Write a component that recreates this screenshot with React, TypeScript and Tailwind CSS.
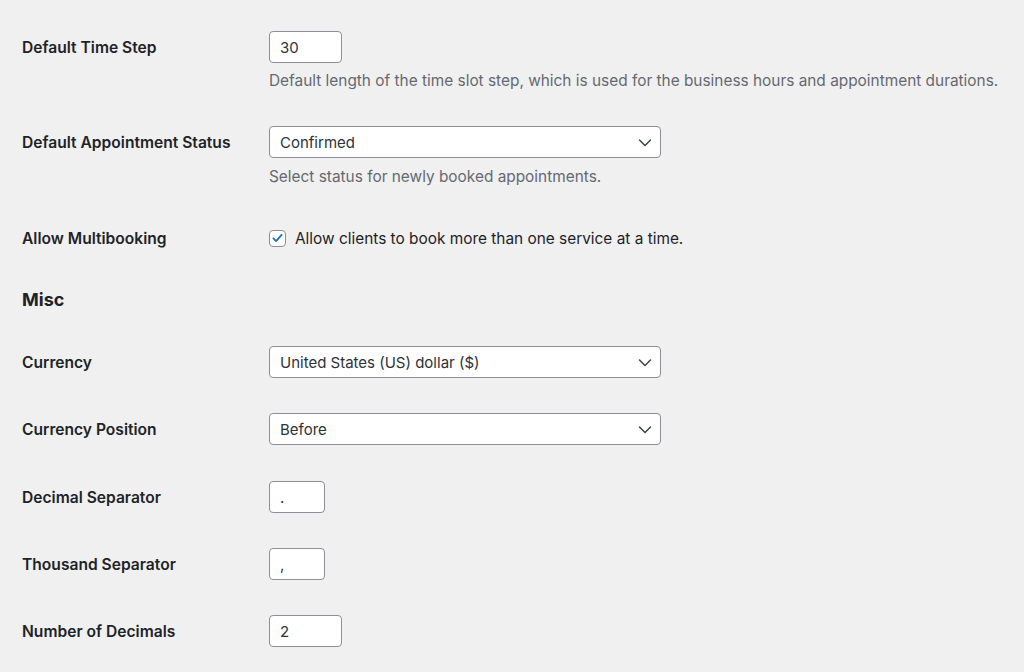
import React from "react";

const Chevron = () => (
  <svg viewBox="0 0 20 20" className="pointer-events-none absolute right-[5px] top-1/2 h-[20px] w-[20px] -translate-y-1/2" fill="none">
    <path d="M4.5 8l5.5 5.5 5.5-5.5" stroke="#3c434a" strokeWidth="1.5" strokeLinecap="round" strokeLinejoin="round" />
  </svg>
);

function Select({ value }: { value: string }) {
  return (
    <div className="relative flex h-[32px] w-[392px] items-center rounded-[4px] border border-[#8c8f94] bg-white pl-[10px] pt-[2px] text-[15px] text-[#2c3338]">
      {value}
      <Chevron />
    </div>
  );
}

function TextBox({ value, w }: { value: string; w: string }) {
  return (
    <div className={`flex h-[32px] items-center rounded-[4px] border border-[#8c8f94] bg-white pl-[10px] pt-[2px] text-[15px] text-[#2c3338] ${w}`}>
      {value}
    </div>
  );
}

function Row({ label, children, className = "" }: { label: string; children: React.ReactNode; className?: string }) {
  return (
    <div className={`flex items-start ${className}`}>
      <div className="h-[32px] w-[247px] shrink-0 pt-[2px] text-[15.6px] font-semibold leading-[30px] text-[#1d2327]">{label}</div>
      <div>{children}</div>
    </div>
  );
}

export default function App() {
  return (
    <div className="min-h-[672px] w-[1024px] overflow-hidden bg-[#f0f0f1] pl-[22px] pt-[31px] font-['Inter',sans-serif] text-[#1d2327]">
      <Row label="Default Time Step">
        <TextBox value="30" w="w-[73px]" />
        <p className="mt-[8px] whitespace-nowrap text-[15.4px] leading-[20px] text-[#646970]">
          Default length of the time slot step, which is used for the business hours and appointment durations.
        </p>
      </Row>

      <Row label="Default Appointment Status" className="mt-[35px]">
        <Select value="Confirmed" />
        <p className="mt-[9px] text-[15.4px] leading-[20px] text-[#646970]">Select status for newly booked appointments.</p>
      </Row>

      <div className="mt-[35px] flex items-center">
        <div className="h-[32px] w-[247px] shrink-0 pt-[2px] text-[15.6px] font-semibold leading-[30px] text-[#1d2327]">Allow Multibooking</div>
        <label className="flex items-center gap-[9px] text-[15.4px] leading-[20px] text-[#1d2327]">
          <span className="flex h-[17px] w-[17px] items-center justify-center rounded-[4px] border border-[#8c8f94] bg-white">
            <svg viewBox="0 0 20 20" className="h-[16px] w-[16px]" fill="none">
              <path d="M4.5 10.5l3.6 3.6L15.5 5.8" stroke="#2271b1" strokeWidth="2.4" strokeLinecap="round" strokeLinejoin="round" />
            </svg>
          </span>
          <span className="pt-[1px]">Allow clients to book more than one service at a time.</span>
        </label>
      </div>

      <h2 className="mt-[33px] pt-[1px] text-[18px] font-bold leading-[24px] text-[#1d2327]">Misc</h2>

      <Row label="Currency" className="mt-[34px]">
        <Select value="United States (US) dollar ($)" />
      </Row>
      <Row label="Currency Position" className="mt-[35px]">
        <Select value="Before" />
      </Row>
      <Row label="Decimal Separator" className="mt-[36px]">
        <TextBox value="." w="w-[56px]" />
      </Row>
      <Row label="Thousand Separator" className="mt-[35px]">
        <TextBox value="," w="w-[56px]" />
      </Row>
      <Row label="Number of Decimals" className="mt-[35px]">
        <TextBox value="2" w="w-[73px]" />
      </Row>
    </div>
  );
}
